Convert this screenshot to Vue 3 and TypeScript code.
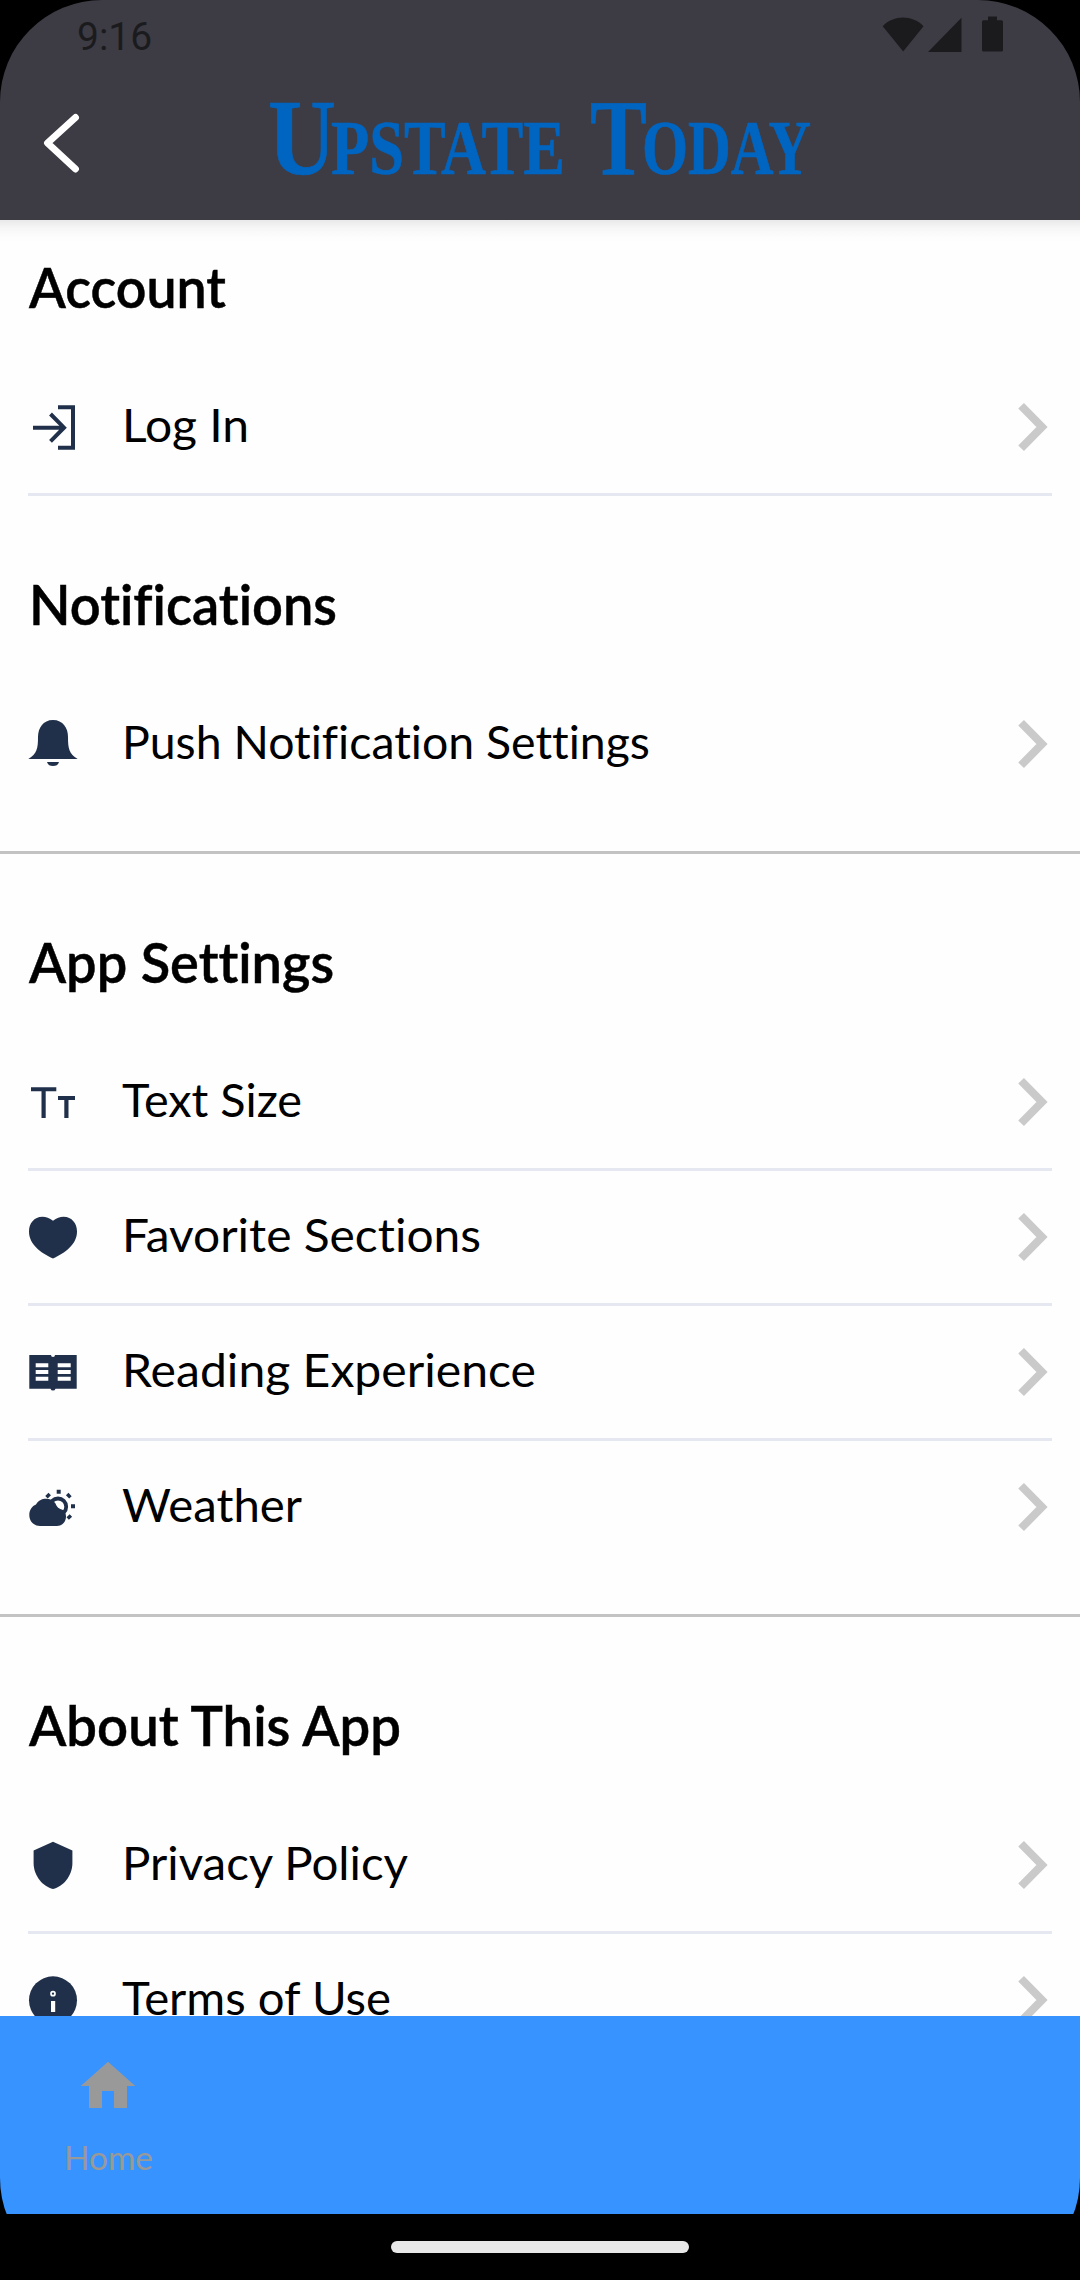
<script setup lang="ts">
import type { Directive } from 'vue'

type IconName = 'login' | 'bell' | 'text' | 'heart' | 'book' | 'weather' | 'shield' | 'info'

interface Item {
  label: string
  icon: IconName
  width: number
}

interface Section {
  title: string
  width: number
  ruled: boolean
  items: Item[]
}

const sections: Section[] = [
  {
    title: 'Account',
    width: 197,
    ruled: false,
    items: [{ label: 'Log In', icon: 'login', width: 127 }],
  },
  {
    title: 'Notifications',
    width: 308,
    ruled: true,
    items: [{ label: 'Push Notification Settings', icon: 'bell', width: 528 }],
  },
  {
    title: 'App Settings',
    width: 305,
    ruled: true,
    items: [
      { label: 'Text Size', icon: 'text', width: 180 },
      { label: 'Favorite Sections', icon: 'heart', width: 359 },
      { label: 'Reading Experience', icon: 'book', width: 414 },
      { label: 'Weather', icon: 'weather', width: 180 },
    ],
  },
  {
    title: 'About This App',
    width: 372,
    ruled: false,
    items: [
      { label: 'Privacy Policy', icon: 'shield', width: 286 },
      { label: 'Terms of Use', icon: 'info', width: 269 },
    ],
  },
]

// Widens (or narrows) a label's glyphs until it takes the given width in pixels.
const vStretch: Directive<HTMLElement, number> = {
  mounted(el, { value }) {
    const scale = value / el.getBoundingClientRect().width
    el.style.transform = `scaleX(${scale.toFixed(4)})`
  },
}
</script>

<template>
  <div class="phone">
    <header class="header">
      <div class="status">
        <span class="clock">9:16</span>
        <svg class="status-icons" width="124" height="40" viewBox="0 0 124 40" fill="#1b1b1e">
          <path d="M1.700 11.200C13-.3 31-.3 42.500 11.200L22.200 36.500Z" />
          <path d="M80.500 2.700V37H47Z" />
          <path d="M107 1.500h9v3.800h4.500a1.500 1.500 0 0 1 1.500 1.500V35a1.500 1.500 0 0 1-1.500 1.500h-18A1.500 1.500 0 0 1 101 35V6.800A1.500 1.500 0 0 1 102.500 5.300H107Z" />
        </svg>
      </div>
      <div class="bar">
        <svg class="back" width="44" height="68" viewBox="0 0 44 68">
          <path d="M35.500 8.500L7.500 34L35.500 60" fill="none" stroke="#fff" stroke-width="6.900" stroke-linecap="round" stroke-linejoin="round" />
        </svg>
        <svg class="logo" width="580" height="128" viewBox="0 0 580 128">
          <g font-family="'Liberation Serif', serif" font-weight="700" fill="#0065c1" stroke="#0065c1" stroke-width=".7">
            <text x="8" y="101.500" font-size="109" textLength="68" lengthAdjust="spacingAndGlyphs">U</text>
            <text x="71" y="101.500" font-size="78" textLength="234" lengthAdjust="spacingAndGlyphs">PSTATE</text>
            <text x="330" y="101.500" font-size="109" textLength="57" lengthAdjust="spacingAndGlyphs">T</text>
            <text x="382" y="101.500" font-size="78" textLength="169" lengthAdjust="spacingAndGlyphs">ODAY</text>
          </g>
        </svg>
      </div>
    </header>

    <main class="content">
      <section v-for="section in sections" :key="section.title" class="section" :class="{ ruled: section.ruled }">
        <h2 class="title"><span v-stretch="section.width" class="fit">{{ section.title }}</span></h2>
        <ul class="list">
          <li v-for="item in section.items" :key="item.label" class="row">
            <svg class="icon" width="48" height="48" viewBox="0 0 48 48" fill="#21304a">
              <g v-if="item.icon === 'login'" fill="none" stroke="#21304a" stroke-width="4">
                <path d="M4 24.700H34M21.500 11L35 24.700L21.500 38.400" />
                <path d="M29 4.200H44V44.800H29" />
              </g>
              <template v-else-if="item.icon === 'bell'">
                <path d="M24 0C14 0 9 8 9 17C9 28 8 34-.7 39H48.700C40 34 39 28 39 17C39 8 34 0 24 0Z" />
                <path d="M18 42H30C29 45 27 46 24 46S19 45 18 42Z" />
              </template>
              <path v-else-if="item.icon === 'text'" d="M2 9.300H27.300V13.300H16.700V40H12.500V13.300H2ZM29 18H46V22H39.500V40H35.300V22H29Z" />
              <path v-else-if="item.icon === 'heart'" d="M24 7.700C20.500 4.800 17 3.700 13.500 3.700C5 3.700 0 10.500 0 18.500C0 31.500 12 40 24 45.500C36 40 48 31.500 48 18.500C48 10.500 43 3.700 34.500 3.700C31 3.700 27.500 4.800 24 7.700Z" />
              <template v-else-if="item.icon === 'book'">
                <path d="M.3 7H22A2 2 0 0 0 26 7H47.700V40.700H26.500A2.600 2.600 0 0 1 21.500 40.700H.3Z" />
                <path d="M6.700 15.300h12.600v4H6.700ZM6.700 21.900h12.600v4H6.700ZM6.700 28.700h12.600v4H6.700ZM28.700 15.300h13v4h-13ZM28.700 21.900h13v4h-13ZM28.700 28.700h13v4h-13Z" fill="#fff" />
              </template>
              <template v-else-if="item.icon === 'weather'">
                <circle cx="29" cy="23.700" r="8.200" fill="#fff" stroke="#21304a" stroke-width="3.800" />
                <path d="M11 43C4.500 43 .3 38 .3 32.300C.3 27 3 23 7 21.500C9 17.500 13 15.700 17 15.700C21 15.700 24.500 17.500 26.500 20.500C27.500 24 30 26 34 27C36 29 37 31 37 33.500C37 39 33 43 28 43Z" />
                <path d="M27.700 6.700h4v4h-4ZM42 21.300h4v4h-4Z" />
                <path d="M17.500 14.300l3.200-3.200M38.200 11l3.200 3.400M38.700 35.500l3.200-3" fill="none" stroke="#21304a" stroke-width="3.500" />
              </template>
              <path v-else-if="item.icon === 'shield'" d="M24 .8L43.400 9.600V22C43.400 35 34 45.700 24 48C14 45.700 4.600 35 4.600 22V9.600Z" />
              <template v-else>
                <circle cx="24" cy="24.300" r="24" />
                <circle cx="24" cy="17.700" r="2" fill="none" stroke="#fff" stroke-width="1.700" />
                <path d="M22 25h4.200v11H22Z" fill="#fff" />
              </template>
            </svg>
            <span class="label"><span v-stretch="item.width" class="fit">{{ item.label }}</span></span>
            <svg class="chevron" width="32" height="52" viewBox="0 0 32 52">
              <path d="M5.100 4.700L26 26L5.100 47.300" fill="none" stroke="#cacaca" stroke-width="8" />
            </svg>
          </li>
        </ul>
      </section>
    </main>

    <nav class="tabs">
      <div class="tab">
        <svg width="56" height="48" viewBox="0 0 56 48" fill="#999">
          <path d="M28 .7L55.300 25H47V47H34V30H22V47H9V25H.7Z" />
        </svg>
        <span class="tab-label"><span v-stretch="89" class="fit">Home</span></span>
      </div>
    </nav>
    <div class="gesture"><span class="pill"></span></div>
  </div>
</template>

<style>
html,
body {
  margin: 0;
  background: #000;
}
</style>

<style scoped>
.phone {
  display: flex;
  flex-direction: column;
  width: 1080px;
  height: 2280px;
  overflow: hidden;
  border-radius: 102px;
  background: #000;
  color: #000;
  font-family: Lato, 'Noto Sans', sans-serif;
  font-variant-ligatures: none;
}

.fit {
  display: inline-block;
  transform-origin: left center;
}

.header {
  flex: none;
  height: 220px;
  background: #3d3c45;
}

.status {
  display: flex;
  justify-content: space-between;
  height: 72px;
  padding: 0 75px 0 77px;
}

.clock {
  align-self: flex-start;
  margin-top: 14px;
  font: 400 39px/46px Roboto, sans-serif;
  color: #1b1b1e;
}

.status-icons {
  margin-top: 15px;
}

.bar {
  display: flex;
  height: 148px;
}

.back {
  flex: none;
  margin: 37px 0 0 40px;
}

.logo {
  flex: none;
  margin-left: 176px;
}

.content {
  flex: none;
  height: 1796px;
  overflow: hidden;
  background: linear-gradient(#e9e9e9, #f6f6f6 8px, #fdfdfd 18px, #fefefe 22px);
}

.section.ruled {
  border-bottom: 3px solid #c3c3c3;
  padding-bottom: 41px;
}

.title {
  margin: 0;
  padding: 78px 29px 44px;
  font-size: 55px;
  font-weight: 600;
  line-height: 60px;
  white-space: nowrap;
  -webkit-text-stroke: 0.5px #000;
}

.section:first-child .title {
  padding-top: 37px;
}

.list {
  margin: 0;
  padding: 0 28px;
  list-style: none;
}

.row {
  display: flex;
  align-items: center;
  height: 132px;
  border-bottom: 3px solid #e5e8f0;
}

.ruled .row:last-child {
  border-bottom: 0;
}

.icon {
  flex: none;
  margin-left: 1px;
  overflow: visible;
}

.label {
  flex: 1;
  margin-left: 45px;
  padding-bottom: 4px;
  font-size: 46px;
  line-height: 128px;
  white-space: nowrap;
}

.chevron {
  flex: none;
  margin-right: 4px;
}

.tabs {
  flex: none;
  display: flex;
  height: 198px;
  background: #3693ff;
}

.tab {
  display: flex;
  flex-direction: column;
  align-items: center;
  width: 216px;
  padding-top: 45px;
  color: #999;
}

.tab-label {
  width: 89px;
  margin-top: 28px;
  font-size: 33px;
  line-height: 40px;
}

.gesture {
  flex: 1;
  display: flex;
  justify-content: center;
  align-items: flex-start;
  background: #000;
}

.pill {
  width: 298px;
  height: 12px;
  margin-top: 27px;
  border-radius: 6px;
  background: #e8e8e8;
}
</style>
